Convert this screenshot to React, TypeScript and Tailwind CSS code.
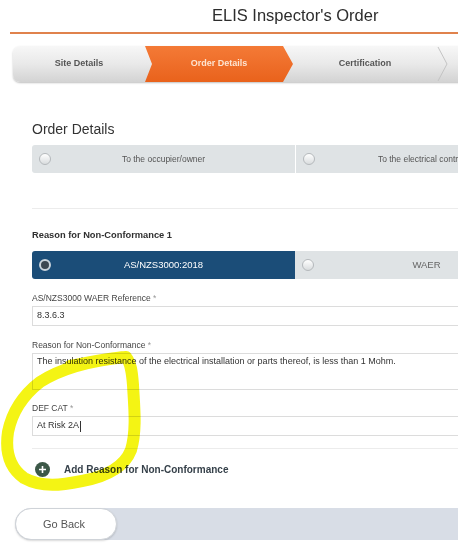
import React from "react";

function Radio({ dark }: { dark?: boolean }) {
  return (
    <span
      className={
        dark
          ? "w-[12px] h-[12px] rounded-full border-[2px] border-[#c9d3dc] bg-[#3b4752] shrink-0"
          : "w-[12px] h-[12px] rounded-full border border-[#b5b9bc] bg-gradient-to-b from-[#ffffff] to-[#d9dcde] shrink-0"
      }
    />
  );
}

export default function App() {
  return (
    <div className="relative w-[458px] h-[552px] overflow-hidden bg-white font-['Liberation_Sans',Arial,sans-serif]">
      <div className="w-[620px]">
        {/* Title */}
        <div className="h-[32px] pl-[212px] pt-[4px] text-[16.5px] leading-[22px] text-[#2d2d2d]">
          ELIS Inspector&apos;s Order
        </div>
        <div className="ml-[10px] h-[2px] bg-[#e0824c]" />

        {/* Breadcrumb */}
        <div className="ml-[13px] mt-[12px] h-[36px] flex items-stretch rounded-l-[7px] bg-gradient-to-b from-[#f7f7f7] via-[#e9e9e9] to-[#d3d3d3] shadow-[0_1px_2px_rgba(0,0,0,0.25)] text-[9px] font-bold text-[#555]">
          <div className="w-[132px] flex items-center justify-center">Site Details</div>
          <div className="w-[148px] flex items-center justify-center text-[#fde4d2] bg-gradient-to-b from-[#f47a36] to-[#e9621b] [clip-path:polygon(0_0,calc(100%-10px)_0,100%_50%,calc(100%-10px)_100%,0_100%,7px_50%)]">
            Order Details
          </div>
          <div className="w-[144px] flex items-center justify-center">Certification</div>
          <svg width="12" height="36" viewBox="0 0 12 36" className="shrink-0">
            <polyline points="1,1 10,18 1,35" fill="none" stroke="#c4c4c4" strokeWidth="1" />
          </svg>
        </div>

        {/* Order details */}
        <div className="pl-[32px]">
          <div className="mt-[38px] text-[14px] leading-[18px] text-[#333]">Order Details</div>
          <div className="mt-[7px] h-[28px] flex gap-[1px] text-[8.5px] text-[#555]">
            <div className="w-[263px] flex items-center bg-[#dfe3e5] rounded-l-[3px] pl-[7px]">
              <Radio />
              <span className="flex-1 text-center pr-[19px]">To the occupier/owner</span>
            </div>
            <div className="w-[263px] flex items-center bg-[#dfe3e5] pl-[7px]">
              <Radio />
              <span className="flex-1 text-center pr-[19px]">To the electrical contractor</span>
            </div>
          </div>

          <div className="mt-[35px] h-px bg-[#ececec]" />

          <div className="mt-[20px] text-[9.3px] leading-[13px] font-bold text-[#2f2f2f]">
            Reason for Non-Conformance 1
          </div>

          <div className="mt-[9px] h-[28px] flex text-[9.5px]">
            <div className="w-[263px] flex items-center bg-[#1b4d78] rounded-l-[3px] pl-[7px]">
              <Radio dark />
              <span className="flex-1 text-center pr-[19px] text-white">AS/NZS3000:2018</span>
            </div>
            <div className="w-[263px] flex items-center bg-[#dfe3e5] pl-[7px] text-[#666]">
              <Radio />
              <span className="flex-1 text-center pr-[19px]">WAER</span>
            </div>
          </div>

          <div className="mt-[13px] text-[8.5px] leading-[12px] text-[#444]">
            AS/NZS3000 WAER Reference <span className="text-[#999]">*</span>
          </div>
          <div className="mt-[2px] h-[20px] border border-[#dcdcdc] flex items-center pl-[4px] text-[9px] text-[#333]">
            8.3.6.3
          </div>

          <div className="mt-[13px] text-[8.5px] leading-[12px] text-[#444]">
            Reason for Non-Conformance <span className="text-[#999]">*</span>
          </div>
          <div className="mt-[2px] h-[37px] border border-[#dcdcdc] pl-[4px] pt-[1px] text-[9px] leading-[12px] text-[#333]">
            The insulation resistance of the electrical installation or parts thereof, is less than 1 Mohm.
          </div>

          <div className="mt-[12px] text-[8.5px] leading-[12px] text-[#444]">
            DEF CAT <span className="text-[#999]">*</span>
          </div>
          <div className="mt-[2px] h-[20px] border border-[#dcdcdc] flex items-center pl-[4px] text-[9px] text-[#333]">
            At Risk 2A<span className="ml-[1px] w-px h-[11px] bg-[#333]" />
          </div>

          <div className="mt-[12px] h-px bg-[#ececec]" />

          <div className="mt-[12px] flex items-center h-[16px]">
            <span className="ml-[3px] w-[15px] h-[15px] rounded-full bg-[#3c5848] flex items-center justify-center">
              <svg width="9" height="9" viewBox="0 0 9 9">
                <path d="M4.5 1v7M1 4.5h7" stroke="#fff" strokeWidth="1.6" />
              </svg>
            </span>
            <span className="ml-[14px] text-[10px] font-bold text-[#36414a]">
              Add Reason for Non-Conformance
            </span>
          </div>
        </div>

        {/* Bottom bar */}
        <div className="ml-[15px] mt-[31px] h-[32px] flex bg-[#d8dde6] rounded-l-full">
          <div className="w-[102px] h-[32px] rounded-full bg-white border border-[#cfd3d8] shadow-[0_1px_2px_rgba(0,0,0,0.15)] flex items-center justify-center text-[11px] text-[#555] pr-[4px]">
            Go Back
          </div>
        </div>
      </div>

      {/* Yellow hand-drawn annotation */}
      <svg
        className="absolute left-0 top-0 pointer-events-none mix-blend-multiply"
        width="458"
        height="552"
        viewBox="0 0 458 552"
      >
        <path
          d="M126 357 C95 360 65 366 40 382 C22 396 12 412 8 432 C5 452 10 468 24 478 C42 488 62 485 82 481 C104 477 124 468 131 450 C137 430 134 405 133 385 C132 372 131 363 126 357 C110 358 90 362 70 366"
          fill="none"
          stroke="#f4f414"
          strokeWidth="12"
          strokeLinecap="round"
          strokeLinejoin="round"
        />
      </svg>
    </div>
  );
}
